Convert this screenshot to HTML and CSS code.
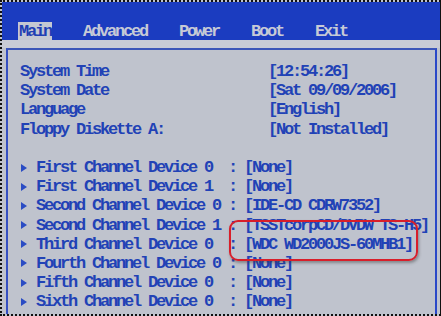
FILE: index.html
```html
<!DOCTYPE html>
<html lang="en">

<head>
    <meta charset="UTF-8">
    <meta name="viewport" content="width=device-width, initial-scale=1.0">
    <link rel="stylesheet" href="styles.css">
    <title>BIOS Setup - Main</title>
</head>

<body>
    <div class="screen">
        <!-- Menu bar -->
        <div class="menubar">
            <span class="tab active">Main</span>
            <span class="tab">Advanced</span>
            <span class="tab">Power</span>
            <span class="tab">Boot</span>
            <span class="tab">Exit</span>
        </div>

        <div class="band"></div>

        <!-- Main panel -->
        <div class="panel">
            <div class="row"><span class="label">System Time</span><span class="value">[12:54:26]</span></div>
            <div class="row"><span class="label">System Date</span><span class="value">[Sat 09/09/2006]</span></div>
            <div class="row"><span class="label">Language</span><span class="value">[English]</span></div>
            <div class="row"><span class="label">Floppy Diskette A:</span><span class="value">[Not Installed]</span></div>

            <div class="row"></div>

            <div class="row item"><span class="arrow"></span><span class="name">First Channel Device 0</span><span class="sep">:</span><span class="value">[None]</span></div>
            <div class="row item"><span class="arrow"></span><span class="name">First Channel Device 1</span><span class="sep">:</span><span class="value">[None]</span></div>
            <div class="row item"><span class="arrow"></span><span class="name">Second Channel Device 0</span><span class="sep">:</span><span class="value">[IDE-CD CDRW7352]</span></div>
            <div class="row item"><span class="arrow"></span><span class="name">Second Channel Device 1</span><span class="sep">:</span><span class="value">[TSSTcorpCD/DVDW TS-H5]</span></div>
            <div class="row item"><span class="arrow"></span><span class="name">Third Channel Device 0</span><span class="sep">:</span><span class="value">[WDC WD2000JS-60MHB1]</span></div>
            <div class="row item"><span class="arrow"></span><span class="name">Fourth Channel Device 0</span><span class="sep">:</span><span class="value">[None]</span></div>
            <div class="row item"><span class="arrow"></span><span class="name">Fifth Channel Device 0</span><span class="sep">:</span><span class="value">[None]</span></div>
            <div class="row item"><span class="arrow"></span><span class="name">Sixth Channel Device 0</span><span class="sep">:</span><span class="value">[None]</span></div>

            <!-- red marker drawn over the hard disk entry -->
            <div class="marker"></div>
        </div>
    </div>
</body>

</html>
```

FILE: styles.css
```css
body {
    margin: 0;
    padding: 0;
    background-color: #fff;
}

.screen {
    width: 438px;
    height: 312px;
    border: 2px dotted #111;
    border-right: 1px solid #111;
    background-color: #bfc3cd;
    display: flex;
    flex-direction: column;
    overflow: hidden;
    font-family: 'Liberation Mono', monospace;
    font-weight: bold;
    font-size: 17px;
    letter-spacing: -2.2px;
}

.menubar {
    height: 38px;
    background-color: #1b3cc0;
    display: flex;
    align-items: flex-end;
    gap: 30px;
    padding-left: 16px;
}

.tab {
    height: 18px;
    line-height: 19px;
    padding: 0 1px;
    color: #c6cad6;
}

.tab.active {
    background-color: #c4c8d2;
    color: #1f3fb4;
}

.band {
    height: 8px;
    background-color: #c9ccd6;
}

.panel {
    position: relative;
    flex: 1;
    margin: 0 3px 0 4px;
    padding: 12px 0 0 12px;
    border-top: 2px solid #3c56b8;
    border-left: 2px solid #3550c2;
    border-right: 2px solid #2a48c8;
    color: #2142b6;
}

.row {
    display: flex;
    height: 19.2px;
    line-height: 19.2px;
    white-space: pre;
}

.label {
    width: 248px;
}

.arrow {
    width: 16px;
    display: flex;
    align-items: center;
}

.arrow::before {
    content: "";
    margin-left: 1px;
    border-left: 6px solid #2a4cc4;
    border-top: 4px solid transparent;
    border-bottom: 4px solid transparent;
}

.name {
    width: 192px;
}

.sep {
    width: 16px;
}

.marker {
    position: absolute;
    left: 221px;
    top: 170px;
    width: 185px;
    height: 37px;
    border: 2px solid #d81e2a;
    border-radius: 9px;
    box-shadow: 1px 2px 3px rgba(60, 60, 60, 0.45);
}
```
